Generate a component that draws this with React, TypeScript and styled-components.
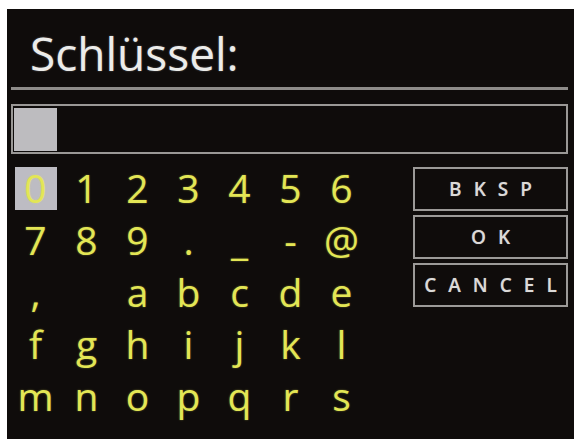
import styled, { createGlobalStyle } from 'styled-components';

const GlobalStyle = createGlobalStyle`
  html, body {
    margin: 0;
    padding: 0;
    background: #ffffff;
  }
  body {
    font-family: 'Open Sans', 'Noto Sans', sans-serif;
  }
`;

const KEY_ROWS = [
  ['0', '1', '2', '3', '4', '5', '6'],
  ['7', '8', '9', '.', '_', '-', '@'],
  [',', ' ', 'a', 'b', 'c', 'd', 'e'],
  ['f', 'g', 'h', 'i', 'j', 'k', 'l'],
  ['m', 'n', 'o', 'p', 'q', 'r', 's'],
];

const ACTIONS = ['BKSP', 'OK', 'CANCEL'];

const Screen = styled.div`
  box-sizing: border-box;
  margin: 9px 0 0 7px;
  width: 567px;
  height: 430px;
  padding: 13px 6px 0 4px;
  background: #0f0c0b;
  display: flex;
  flex-direction: column;
  overflow: hidden;
`;

const Title = styled.h1`
  margin: 0;
  padding-left: 19px;
  height: 62px;
  font-size: 46px;
  line-height: 62px;
  font-weight: 400;
  color: #ececea;
  text-shadow: 0 0 2px rgba(255, 255, 255, 0.35);
`;

const Rule = styled.div`
  margin-top: 3px;
  height: 3px;
  background: #8e8c8a;
`;

const InputBox = styled.div`
  box-sizing: border-box;
  margin-top: 14px;
  height: 50px;
  border: 2px solid #9a9896;
  padding: 2px 1px;
`;

const Cursor = styled.div`
  width: 43px;
  height: 43px;
  background: #bdbcbf;
`;

const Board = styled.div`
  margin-top: 8px;
  display: flex;
  justify-content: space-between;
  align-items: flex-start;
`;

const KeyGrid = styled.div`
  margin-left: -1px;
  display: grid;
  grid-template-columns: repeat(7, 51px);
  grid-auto-rows: 52px;
`;

const KeyCell = styled.div`
  display: flex;
  align-items: center;
  justify-content: center;
`;

const KeyChar = styled.span<{ $selected?: boolean }>`
  display: flex;
  align-items: center;
  justify-content: center;
  width: 42px;
  height: 43px;
  font-size: 39px;
  line-height: 52px;
  color: #e3e655;
  white-space: pre;
  background: ${(p) => (p.$selected ? '#bdbcc3' : 'transparent')};
  text-shadow: 0 0 2px rgba(228, 232, 90, 0.45);
`;

const Actions = styled.div`
  margin-top: 5px;
  width: 155px;
  display: flex;
  flex-direction: column;
  gap: 4px;
`;

const ActionButton = styled.div`
  box-sizing: border-box;
  height: 44px;
  border: 2px solid #9c9a98;
  display: flex;
  align-items: center;
  justify-content: center;
  padding-left: 12px;
  font-size: 19px;
  font-weight: 600;
  letter-spacing: 12px;
  color: #dcdad8;
  text-shadow: 0 0 1px rgba(255, 255, 255, 0.4);
`;

export default function App() {
  return (
    <>
      <GlobalStyle />
      <Screen>
        <Title>Schlüssel:</Title>
        <Rule />
        <InputBox>
          <Cursor />
        </InputBox>
        <Board>
          <KeyGrid>
            {KEY_ROWS.flatMap((row, r) =>
              row.map((ch, c) => (
                <KeyCell key={`${r}-${c}`}>
                  <KeyChar $selected={r === 0 && c === 0}>{ch}</KeyChar>
                </KeyCell>
              ))
            )}
          </KeyGrid>
          <Actions>
            {ACTIONS.map((label) => (
              <ActionButton key={label}>{label}</ActionButton>
            ))}
          </Actions>
        </Board>
      </Screen>
    </>
  );
}
